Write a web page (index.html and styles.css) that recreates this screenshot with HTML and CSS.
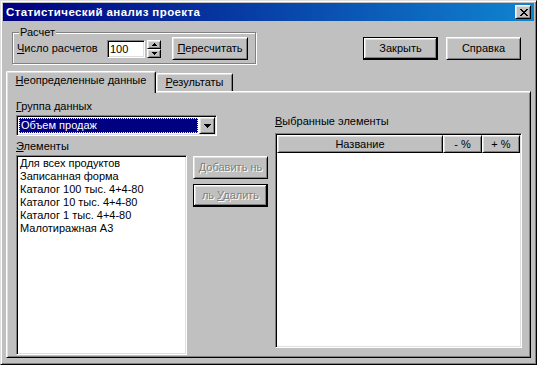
FILE: index.html
```html
<!DOCTYPE html>
<html lang="ru">
<head>
<meta charset="utf-8">
<title>Статистический анализ проекта</title>
<link rel="stylesheet" href="styles.css">
</head>
<body>
<div class="window">
  <div class="titlebar">
    <span class="title">Статистический анализ проекта</span>
    <span class="close"><svg width="8" height="7" viewBox="0 0 8 7" shape-rendering="crispEdges"><path fill="#000" d="M0 0h2v1h-2z M6 0h2v1h-2z M1 1h2v1h-2z M5 1h2v1h-2z M2 2h4v1h-4z M3 3h2v1h-2z M2 4h4v1h-4z M1 5h2v1h-2z M5 5h2v1h-2z M0 6h2v1h-2z M6 6h2v1h-2z"/></svg></span>
  </div>

  <div class="toprow">
    <div class="group">
      <span class="legend">Расчет</span>
      <div class="group-row">
        <span class="count-label"><u>Ч</u>исло расчетов</span>
        <span class="edit">100</span>
        <span class="spin">
          <span class="spin-btn up"><svg width="5" height="3" viewBox="0 0 5 3" shape-rendering="crispEdges"><path fill="#000" d="M2 0h1v1h1v1h1v1H0V2h1V1h1z"/></svg></span>
          <span class="spin-btn down"><svg width="5" height="3" viewBox="0 0 5 3" shape-rendering="crispEdges"><path fill="#000" d="M0 0h5v1h-1v1h-1v1h-1v-1h-1v-1h-1z"/></svg></span>
        </span>
        <span class="btn btn-recalc"><span><u>П</u>ересчитать</span></span>
      </div>
    </div>
    <div class="actions">
      <span class="btn default">Закрыть</span>
      <span class="btn">Справка</span>
    </div>
  </div>

  <div class="tabs">
    <span class="tab active"><u>Н</u>еопределенные данные</span>
    <span class="tab second"><u>Р</u>езультаты</span>
  </div>

  <div class="panel">
    <div class="left">
      <div class="lbl"><u>Г</u>руппа данных</div>
      <div class="combo sunken">
        <span class="combo-text">Объем продаж</span>
        <span class="combo-btn"><svg width="7" height="4" viewBox="0 0 7 4" shape-rendering="crispEdges"><path fill="#000" d="M0 0h7v1h-1v1h-1v1h-1v1h-1v-1h-1v-1h-1v-1h-1z"/></svg></span>
      </div>
      <div class="lbl lbl-elements"><u>Э</u>лементы</div>
      <div class="row">
        <div class="listbox sunken">
          <div class="item">Для всех продуктов</div>
          <div class="item">Записанная форма</div>
          <div class="item">Каталог 100 тыс. 4+4-80</div>
          <div class="item">Каталог 10 тыс. 4+4-80</div>
          <div class="item">Каталог 1 тыс. 4+4-80</div>
          <div class="item">Малотиражная А3</div>
        </div>
        <div class="btncol">
          <span class="btn disabled"><span><u>Д</u>обавить нь</span></span>
          <span class="btn default disabled"><span>ль <u>У</u>далить</span></span>
        </div>
      </div>
    </div>
    <div class="right">
      <div class="lbl"><u>В</u>ыбранные элементы</div>
      <div class="listview sunken">
        <div class="header">
          <span class="hcell c-name">Название</span>
          <span class="hcell c-minus">- %</span>
          <span class="hcell c-plus">+ %</span>
        </div>
      </div>
    </div>
  </div>
</div>
</body>
</html>
```

FILE: styles.css
```css
* { box-sizing: border-box; }

html, body {
  margin: 0;
  padding: 0;
}

body {
  width: 537px;
  height: 365px;
  overflow: hidden;
  background: #c0c0c0;
  font-family: "Liberation Sans", Arial, sans-serif;
  font-size: 11px;
  line-height: 13px;
  color: #000;
}

u {
  text-decoration: underline;
  text-decoration-thickness: 1px;
  text-underline-offset: 1px;
}

.window {
  width: 537px;
  height: 365px;
  background: #c0c0c0;
  border: 1px solid;
  border-color: #dfdfdf #000 #000 #dfdfdf;
  box-shadow: inset 1px 1px #fff, inset -1px -1px #808080;
  padding: 2px;
  display: flex;
  flex-direction: column;
}

/* Title bar */
.titlebar {
  flex: none;
  height: 18px;
  display: flex;
  align-items: center;
  padding: 0 3px 0 3px;
  background: linear-gradient(to right, #000080, #1084d0);
  color: #fff;
  font-weight: bold;
  font-size: 11.5px;
}

.title { flex: 1; white-space: nowrap; letter-spacing: 0.4px; }

.close {
  width: 16px;
  height: 14px;
  display: flex;
  align-items: center;
  justify-content: center;
  background: #c0c0c0;
  border: 1px solid;
  border-color: #fff #000 #000 #fff;
  box-shadow: inset 1px 1px #dfdfdf, inset -1px -1px #808080;
}

.close svg { display: block; margin-left: 1px; }

/* Buttons */
.btn {
  width: 75px;
  height: 23px;
  display: flex;
  align-items: center;
  justify-content: center;
  background: #c0c0c0;
  border: 1px solid;
  border-color: #fff #000 #000 #fff;
  box-shadow: inset 1px 1px #dfdfdf, inset -1px -1px #808080;
  white-space: nowrap;
}

.btn.default {
  border-color: #000;
  box-shadow: inset -1px -1px #000, inset 1px 1px #fff, inset -2px -2px #808080, inset 2px 2px #dfdfdf;
}

.btn.disabled {
  color: #808080;
  text-shadow: 1px 1px 0 #fff;
}

/* Top row */
.toprow {
  flex: none;
  display: flex;
  align-items: flex-start;
  margin-top: 11px;
  padding: 0 13px 0 9px;
}

.group {
  position: relative;
  width: 244px;
  height: 32px;
  border: 1px solid #808080;
  box-shadow: inset 1px 1px #fff, 1px 1px #fff;
  padding: 4px 0 0 4px;
}

.legend {
  position: absolute;
  top: -7px;
  left: 6px;
  padding: 0 1px;
  background: #c0c0c0;
}

.group-row {
  display: flex;
  align-items: center;
  height: 23px;
}

.count-label { width: 90px; white-space: nowrap; }

.edit {
  width: 38px;
  height: 18px;
  background: #fff;
  border: 1px solid;
  border-color: #808080 #fff #fff #808080;
  box-shadow: inset 1px 1px #000, inset -1px -1px #dfdfdf;
  padding: 2px 0 0 2px;
}

.spin {
  width: 14px;
  height: 18px;
  margin-left: 2px;
  display: flex;
  flex-direction: column;
}

.spin-btn {
  flex: 1;
  display: flex;
  align-items: center;
  justify-content: center;
  background: #c0c0c0;
  border: 1px solid;
  border-color: #fff #000 #000 #fff;
  box-shadow: inset 1px 1px #dfdfdf, inset -1px -1px #808080;
}

.spin-btn svg { display: block; }

.btn-recalc { width: 76px; margin-left: 11px; }

.actions {
  margin-left: auto;
  margin-top: 5px;
  display: flex;
  gap: 8px;
}

/* Tabs */
.tabs {
  flex: none;
  position: relative;
  z-index: 1;
  display: flex;
  align-items: flex-end;
  height: 20px;
  margin-top: 7px;
  padding-left: 3px;
}

.tab {
  height: 18px;
  padding-top: 2px;
  text-align: center;
  white-space: nowrap;
  background: #c0c0c0;
  border: 1px solid;
  border-bottom: none;
  border-color: #fff #000 #000 #fff;
  border-radius: 2px 2px 0 0;
  box-shadow: inset 1px 1px #dfdfdf, inset -1px 0 #808080;
}

.tab.active {
  width: 150px;
  height: 22px;
  margin-bottom: -2px;
}

.tab.second { width: 77px; }

/* Panel */
.panel {
  flex: 1;
  display: flex;
  align-items: flex-start;
  margin: 0 3px 4px 3px;
  padding: 8px 0 0 9px;
  border: 1px solid;
  border-color: #fff #000 #000 #fff;
  box-shadow: inset 1px 1px #dfdfdf, inset -1px -1px #808080;
}

.sunken {
  background: #fff;
  border: 1px solid;
  border-color: #808080 #fff #fff #808080;
  box-shadow: inset 1px 1px #000, inset -1px -1px #dfdfdf;
  padding: 1px;
}

.left {
  width: 252px;
  display: flex;
  flex-direction: column;
}

.lbl { height: 13px; white-space: nowrap; }

.combo {
  width: 201px;
  height: 21px;
  margin-top: 2px;
  display: flex;
}

.combo-text {
  flex: 1;
  margin: 1px;
  padding-left: 1px;
  background: #000080;
  color: #fff;
  border: 1px dotted #ffff80;
  line-height: 13px;
}

.combo-btn {
  width: 16px;
  height: 17px;
  display: flex;
  align-items: center;
  justify-content: center;
  background: #c0c0c0;
  border: 1px solid;
  border-color: #fff #000 #000 #fff;
  box-shadow: inset 1px 1px #dfdfdf, inset -1px -1px #808080;
}

.combo-btn svg { display: block; }

.lbl-elements { margin-top: 4px; }

.row {
  display: flex;
  gap: 6px;
  margin-top: 2px;
}

.listbox {
  width: 171px;
  height: 200px;
  padding: 1px 1px 1px 3px;
}

.item { height: 13px; white-space: nowrap; }

.btncol {
  display: flex;
  flex-direction: column;
  gap: 5px;
  margin-top: 1px;
}

.right {
  margin-left: 7px;
  padding-top: 15px;
  display: flex;
  flex-direction: column;
}

.listview {
  width: 247px;
  height: 215px;
  margin-top: 5px;
}

.header {
  display: flex;
  height: 18px;
}

.hcell {
  display: flex;
  align-items: center;
  justify-content: center;
  background: #c0c0c0;
  border: 1px solid;
  border-color: #fff #000 #000 #fff;
  box-shadow: inset 1px 1px #dfdfdf, inset -1px -1px #808080;
  white-space: nowrap;
}

.c-name { width: 166px; }
.c-minus { width: 39px; }
.c-plus { width: 38px; }
```
